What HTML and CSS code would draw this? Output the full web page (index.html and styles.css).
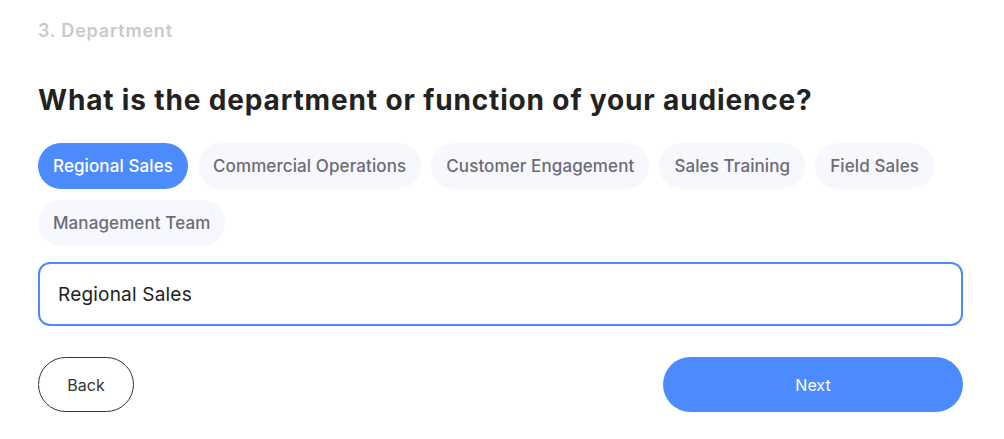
FILE: index.html
```html
<!DOCTYPE html>
<html>
<head>
<meta charset="utf-8">
<link rel="stylesheet" href="styles.css">
</head>
<body>
<div class="page">
  <div class="step">3. Department</div>
  <h1 class="title">What is the department or function of your audience?</h1>
  <div class="chips">
    <button class="chip active">Regional Sales</button>
    <button class="chip">Commercial Operations</button>
    <button class="chip">Customer Engagement</button>
    <button class="chip">Sales Training</button>
    <button class="chip">Field Sales</button>
    <button class="chip">Management Team</button>
  </div>
  <div class="input">Regional Sales</div>
  <div class="actions">
    <button class="btn back">Back</button>
    <button class="btn next">Next</button>
  </div>
</div>
</body>
</html>
```
FILE: styles.css
```css
* { box-sizing: border-box; }
html, body { margin: 0; padding: 0; background: #fff; }
body { font-family: Inter, "Noto Sans", sans-serif; }
.page { width: 925px; margin-left: 38px; padding-top: 19px; }
.step { font-size: 18px; font-weight: 600; color: #c9c9c9; line-height: 24px; height: 24px; letter-spacing: 0.8px; }
.title { margin: 40px 0 0; font-size: 28px; font-weight: 700; color: #222; line-height: 34px; letter-spacing: 0.85px; }
.chips { display: flex; flex-wrap: wrap; gap: 11px 10px; margin-top: 26px; }
.chip { font-family: inherit; height: 46px; padding: 0 15px; border: none; border-radius: 23px; background: #f7f8fd; color: #6c6b78; font-size: 17px; font-weight: 500; letter-spacing: 0.1px; cursor: pointer; }
.chip.active { background: #4c8bfd; color: #fff; }
.input { margin-top: 16px; height: 64px; border: 2px solid #4c8bfd; border-radius: 12px; padding: 0 18px; display: flex; align-items: center; font-size: 19px; color: #222; letter-spacing: 0.2px; }
.actions { display: flex; justify-content: space-between; margin-top: 31px; }
.btn { font-family: inherit; height: 55px; border-radius: 28px; font-size: 16px; font-weight: 400; cursor: pointer; }
.back { width: 96px; background: #fff; border: 1px solid #333; color: #333; }
.next { width: 300px; background: #4c8bfd; border: none; color: #fff; }
```
